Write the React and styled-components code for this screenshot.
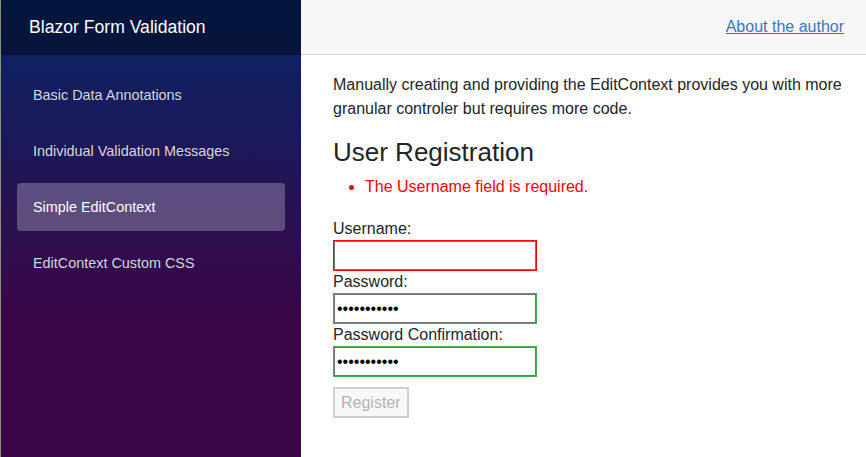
import styled, { createGlobalStyle } from "styled-components";

const GlobalStyle = createGlobalStyle`
  html, body {
    margin: 0;
    padding: 0;
    height: 100%;
  }
  body {
    font-family: "Liberation Sans", Arial, sans-serif;
    font-size: 16px;
    color: #212529;
    background: #fff;
  }
  * {
    box-sizing: border-box;
  }
`;

const navItems = [
  "Basic Data Annotations",
  "Individual Validation Messages",
  "Simple EditContext",
  "EditContext Custom CSS",
];

const App = () => {
  return (
    <>
      <GlobalStyle />
      <Page>
        <Sidebar>
          <Brand>Blazor Form Validation</Brand>
          <Nav>
            {navItems.map((item) => (
              <NavItem key={item}>
                <NavLink $active={item === "Simple EditContext"}>{item}</NavLink>
              </NavItem>
            ))}
          </Nav>
        </Sidebar>
        <Main>
          <TopRow>
            <AuthorLink href="#">About the author</AuthorLink>
          </TopRow>
          <Content>
            <Intro>
              Manually creating and providing the EditContext provides you with
              more granular controler but requires more code.
            </Intro>
            <Title>User Registration</Title>
            <Errors>
              <li>The Username field is required.</li>
            </Errors>
            <form onSubmit={(e) => e.preventDefault()}>
              <Field>
                <Label>Username:</Label>
                <Input type="text" $state="invalid" defaultValue="" />
              </Field>
              <Field>
                <Label>Password:</Label>
                <Input type="password" $state="valid" defaultValue="12345678901" />
              </Field>
              <Field>
                <Label>Password Confirmation:</Label>
                <Input type="password" $state="valid" defaultValue="12345678901" />
              </Field>
              <RegisterButton type="submit" disabled>
                Register
              </RegisterButton>
            </form>
          </Content>
        </Main>
      </Page>
    </>
  );
};

export default App;

const Page = styled.div`
  display: flex;
  flex-direction: row;
  height: 100vh;
  border-left: 1px solid #8c8c8c;
`;

const Sidebar = styled.div`
  width: 300px;
  flex-shrink: 0;
  height: 100%;
  background-image: linear-gradient(180deg, rgb(5, 39, 103) 0%, #3a0647 70%);
  display: flex;
  flex-direction: column;
`;

const Brand = styled.div`
  height: 55px;
  display: flex;
  align-items: center;
  padding-left: 28px;
  background-color: rgba(0, 0, 0, 0.4);
  color: #fff;
  font-size: 17.6px;
`;

const Nav = styled.ul`
  list-style: none;
  margin: 0;
  padding: 16px 0 0 0;
`;

const NavItem = styled.li`
  padding: 0 16px 8px 16px;
`;

const NavLink = styled.a`
  display: block;
  height: 48px;
  line-height: 48px;
  padding-left: 16px;
  border-radius: 4px;
  font-size: 14.4px;
  color: ${(p) => (p.$active ? "#fff" : "#d7d7d7")};
  background: ${(p) => (p.$active ? "rgba(255, 255, 255, 0.25)" : "none")};
  cursor: pointer;
`;

const Main = styled.div`
  flex: 1;
  display: flex;
  flex-direction: column;
  min-width: 0;
`;

const TopRow = styled.div`
  height: 55px;
  flex-shrink: 0;
  background-color: #f7f7f7;
  border-bottom: 1px solid #d6d5d5;
  display: flex;
  align-items: center;
  justify-content: flex-end;
  padding-right: 22px;
`;

const AuthorLink = styled.a`
  color: #3a77c4;
  text-decoration: underline;
  font-size: 16px;
`;

const Content = styled.article`
  padding: 18px 24px 0 32px;
`;

const Intro = styled.p`
  margin: 0 0 16px 0;
  line-height: 24px;
`;

const Title = styled.h3`
  margin: 0 0 7px 0;
  font-size: 26px;
  font-weight: 500;
  line-height: 31.2px;
`;

const Errors = styled.ul`
  margin: 0 0 19px 0;
  padding-left: 32px;
  color: red;
  line-height: 24px;
`;

const Field = styled.div`
  display: flex;
  flex-direction: column;
  align-items: flex-start;
`;

const Label = styled.label`
  display: block;
  line-height: 22px;
`;

const Input = styled.input`
  width: 202px;
  height: 29px;
  margin: 1px;
  padding: 1px 2px;
  border: 1px solid #767676;
  font-family: "Liberation Sans", Arial, sans-serif;
  font-size: 16px;
  outline: none;
  box-shadow: 0 0 0 1px ${(p) => (p.$state === "invalid" ? "red" : "#3fae4b")};
`;

const RegisterButton = styled.button`
  margin-top: 10px;
  height: 31px;
  padding: 0 6px;
  border: 2px solid #cfcfcf;
  background: #f8f8f8;
  color: #b4b4b4;
  font-family: "Liberation Sans", Arial, sans-serif;
  font-size: 16px;
`;
